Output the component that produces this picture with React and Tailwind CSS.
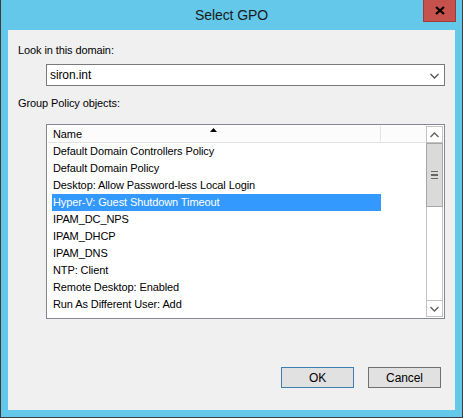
import React from 'react';

const rows = [
    'Default Domain Controllers Policy',
    'Default Domain Policy',
    'Desktop: Allow Password-less Local Login',
    'Hyper-V: Guest Shutdown Timeout',
    'IPAM_DC_NPS',
    'IPAM_DHCP',
    'IPAM_DNS',
    'NTP: Client',
    'Remote Desktop: Enabled',
    'Run As Different User: Add',
];

const Chevron = ({ up, className }) => (
    <svg width="9" height="6" viewBox="0 0 9 6" className={className}>
        <path
            d={up ? 'M0.5 5 L4.5 1 L8.5 5' : 'M0.5 1 L4.5 5 L8.5 1'}
            fill="none"
            stroke="currentColor"
            strokeWidth="1.4"
        />
    </svg>
);

const App = () => {
    return (
        <div
            className="w-[463px] h-[418px] bg-[#63c8ea] border-x border-b border-[#3c3c3c] flex flex-col relative"
            style={{ fontFamily: '"Liberation Sans", Arial, sans-serif' }}
        >
            <div className="h-[30px] flex items-center justify-center text-[14px] tracking-[-0.1px] text-[#1a1a1a] pt-[1px]">
                Select GPO
            </div>
            <div className="absolute top-0 right-[6px] w-[33px] h-[22px] bg-[#c7514c] border border-[#9c3c38] border-t-0 flex items-center justify-center">
                <svg width="10" height="9" viewBox="0 0 10 9">
                    <path d="M1 1 L9 8 M9 1 L1 8" stroke="#000" strokeWidth="2.2" />
                </svg>
            </div>

            <div className="mx-[7px] h-[380px] bg-[#f0f0f0] px-[10px] flex flex-col text-[11px] text-black tracking-[-0.1px]">
                <div className="pt-[12px] leading-[16px]">Look in this domain:</div>
                <div className="mt-[6px] ml-[28px] w-[399px] h-[22px] border border-[#7a7a7a] bg-white flex items-center justify-between pl-[3px] pr-[5px]">
                    <span className="text-[12px]">siron.int</span>
                    <Chevron className="text-[#555] mt-px" />
                </div>
                <div className="mt-[9px] leading-[16px]">Group Policy objects:</div>

                <div className="mt-[13px] ml-[28px] w-[399px] h-[195px] border border-[#828790] bg-white p-px flex">
                    <div className="flex-1 flex flex-col">
                        <div className="h-[17px] flex bg-[#fcfcfc]">
                            <div className="w-[333px] border-r border-b border-[#e3e3e3] pl-[5px] leading-[16px] relative">
                                Name
                                <svg width="7" height="4" viewBox="0 0 7 4" className="absolute left-[162px] top-[2px]">
                                    <path d="M0 4 L3.5 0 L7 4 Z" fill="#000" />
                                </svg>
                            </div>
                            <div className="flex-1 border-b border-[#e3e3e3]"></div>
                        </div>
                        {rows.map((r, i) => (
                            <div
                                key={r}
                                className={
                                    'h-[17px] ml-[4px] w-[329px] pl-[1px] leading-[17px] whitespace-nowrap ' +
                                    (i === 3 ? 'bg-[#3399ff] text-white' : '')
                                }
                            >
                                {r}
                            </div>
                        ))}
                    </div>
                    <div className="w-[17px] flex flex-col">
                        <div className="h-[17px] border border-[#c3c3c3] flex items-center justify-center text-[#606060]">
                            <Chevron up />
                        </div>
                        <div className="h-[64px] border border-[#a6a6a6] bg-[#dadada] flex flex-col items-center justify-center gap-[2px]">
                            <div className="w-[7px] h-[1.5px] bg-[#666]"></div>
                            <div className="w-[7px] h-[1.5px] bg-[#666]"></div>
                            <div className="w-[7px] h-[1.5px] bg-[#666]"></div>
                        </div>
                        <div className="flex-1 border-x border-[#c3c3c3]"></div>
                        <div className="h-[17px] border border-[#c3c3c3] flex items-center justify-center text-[#606060]">
                            <Chevron />
                        </div>
                    </div>
                </div>

                <div className="mt-[48px] flex justify-end gap-[14px] pr-[4px] text-[12px]">
                    <button className="w-[73px] h-[21px] bg-[#e1e1e1] border border-[#3c7fb1]">OK</button>
                    <button className="w-[73px] h-[21px] bg-[#e1e1e1] border border-[#707070]">Cancel</button>
                </div>
            </div>
        </div>
    );
};

export default App;
